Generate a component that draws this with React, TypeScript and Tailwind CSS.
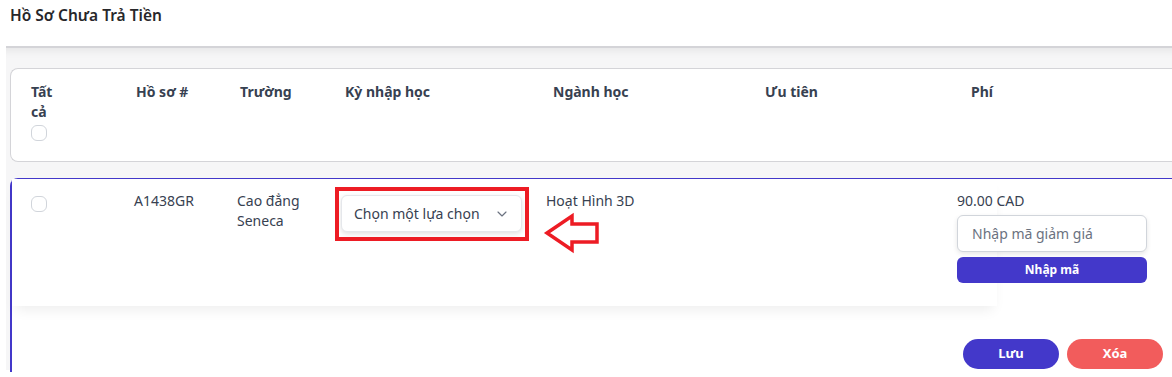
import React from "react";
import { ChevronDown } from "lucide-react";

export default function App() {
  return (
    <div className="relative w-[1172px] h-[377px] overflow-hidden bg-white font-['Noto_Sans','Liberation_Sans',sans-serif] text-[#374151]">
      <div className="h-[46px] pl-[10px] pt-[4px] text-[15.5px] leading-[22px] font-semibold text-[#27272a]">
        Hồ Sơ Chưa Trả Tiền
      </div>

      <div className="ml-[6px] w-[1200px] h-[324px] border-t-2 border-[#d4d4d8] bg-[#f6f6f7] pl-[4px] pt-[20px] shadow-[inset_0_10px_10px_-8px_rgba(0,0,0,0.08)]">
        {/* header card */}
        <div className="flex h-[94px] rounded-l-lg border border-r-0 border-[#d4d4d8] bg-white pl-[20px] pt-[13px] text-[14px] leading-[20px] font-bold text-[#374151]">
          <div className="w-[105px] shrink-0 flex flex-col items-start">
            <span className="w-[28px]">Tất cả</span>
            <span className="mt-[3px] block h-[16px] w-[16px] rounded-md border border-[#d1d5db] bg-white" />
          </div>
          <div className="w-[104px] shrink-0">Hồ sơ #</div>
          <div className="w-[105px] shrink-0">Trường</div>
          <div className="w-[208px] shrink-0">Kỳ nhập học</div>
          <div className="w-[212px] shrink-0">Ngành học</div>
          <div className="w-[206px] shrink-0">Ưu tiên</div>
          <div className="w-[150px] shrink-0">Phí</div>
        </div>

        {/* row card */}
        <div className="mt-[16px] h-[194px] rounded-tl-lg border-l-2 border-t border-[#4338ca] bg-white">
          <div className="flex h-[127px] w-[985px] bg-white pl-[19px] pt-[12px] text-[14px] leading-[20px] text-[#374151] shadow-[0_8px_12px_-4px_rgba(0,0,0,0.07)]">
            <div className="w-[103px] shrink-0">
              <span className="mt-[5px] block h-[16px] w-[16px] rounded-md border border-[#d1d5db] bg-white" />
            </div>
            <div className="w-[103px] shrink-0">A1438GR</div>
            <div className="w-[104px] shrink-0">
              Cao đẳng
              <br />
              Seneca
            </div>
            <div className="w-[205px] shrink-0">
              <div className="mt-[4px] flex h-[37px] w-[181px] items-center justify-between rounded-md border border-[#e5e7eb] bg-white pl-[12px] pr-[11px] shadow-[0_2px_5px_rgba(0,0,0,0.12)]">
                <span className="text-[14px] text-[#374151]">Chọn một lựa chọn</span>
                <ChevronDown size={16} strokeWidth={1.75} className="text-[#6b7280]" />
              </div>
            </div>
            <div className="w-[411px] shrink-0">Hoạt Hình 3D</div>
            <div className="w-[190px] shrink-0">
              <div>90.00 CAD</div>
              <div className="mt-[4px] flex h-[37px] w-[190px] items-center rounded-md border border-[#d1d5db] bg-white pl-[14px] text-[14px] text-[#6b7280] shadow-[0_2px_5px_rgba(0,0,0,0.1)]">
                Nhập mã giảm giá
              </div>
              <div className="mt-[5px] flex h-[26px] w-[190px] items-center justify-center rounded-md bg-[#4338ca] text-[12px] font-bold text-white">
                Nhập mã
              </div>
            </div>
          </div>

          <div className="mt-[33px] flex w-[1151px] justify-end gap-[8px]">
            <button className="flex h-[30px] w-[96px] items-center justify-center rounded-full bg-[#4338ca] text-[13px] font-bold text-white">
              Lưu
            </button>
            <button className="flex h-[30px] w-[96px] items-center justify-center rounded-full bg-[#f25c5c] text-[13px] font-bold text-white">
              Xóa
            </button>
          </div>
        </div>
      </div>

      {/* annotation: red frame */}
      <div className="absolute left-[335px] top-[187px] h-[54px] w-[194px] border-4 border-[#ed1c24]" />
      {/* annotation: red arrow */}
      <svg className="absolute left-[540px] top-[210px]" width="64" height="46" viewBox="540 210 64 46">
        <polygon
          points="547,233 572,216 572,224 597,224 597,242 572,242 572,250"
          fill="none"
          stroke="#ed1c24"
          strokeWidth="3.5"
          strokeLinejoin="miter"
        />
      </svg>
    </div>
  );
}
